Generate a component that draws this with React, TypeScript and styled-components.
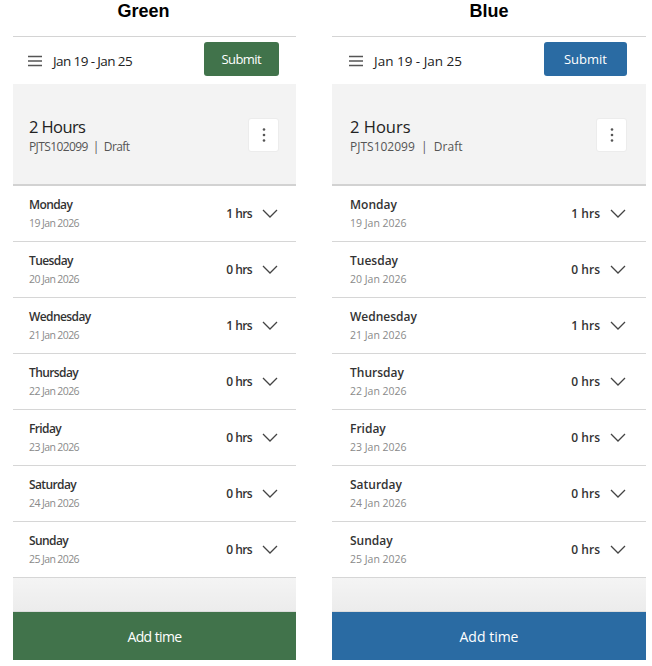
import React from "react";
import styled, { createGlobalStyle } from "styled-components";

interface Day {
    name: string;
    date: string;
    hours: number;
}

const days: Day[] = [
    { name: "Monday", date: "19 Jan 2026", hours: 1 },
    { name: "Tuesday", date: "20 Jan 2026", hours: 0 },
    { name: "Wednesday", date: "21 Jan 2026", hours: 1 },
    { name: "Thursday", date: "22 Jan 2026", hours: 0 },
    { name: "Friday", date: "23 Jan 2026", hours: 0 },
    { name: "Saturday", date: "24 Jan 2026", hours: 0 },
    { name: "Sunday", date: "25 Jan 2026", hours: 0 },
];

interface Variant {
    title: string;
    accent: string;
    width: number;
    pad: number;
    tight: boolean;
    titleShift: number;
}

const variants: Variant[] = [
    { title: "Green", accent: "#41734b", width: 283, pad: 16, tight: true, titleShift: 22 },
    { title: "Blue", accent: "#2a6ba3", width: 314, pad: 18, tight: false, titleShift: 0 },
];

const Hamburger = () => (
    <svg width="14" height="12" viewBox="0 0 14 12">
        <path d="M0 1.5h14M0 6h14M0 10.5h14" stroke="#555" strokeWidth="1.4" />
    </svg>
);

const Chevron = () => (
    <svg width="16" height="9" viewBox="0 0 16 9" fill="none">
        <path d="M1 1l7 7 7-7" stroke="#444" strokeWidth="1.3" />
    </svg>
);

const Kebab = () => (
    <svg width="4" height="16" viewBox="0 0 4 16">
        <circle cx="2" cy="2.5" r="1.3" fill="#555" />
        <circle cx="2" cy="8" r="1.3" fill="#555" />
        <circle cx="2" cy="13.5" r="1.3" fill="#555" />
    </svg>
);

const Phone = ({ v }: { v: Variant }) => (
    <Column $width={v.width}>
        <Title $shift={v.titleShift}>{v.title}</Title>
        <Screen $tight={v.tight}>
            <TopBar $pad={v.pad}>
                <Range>
                    <Hamburger />
                    <span>Jan 19 - Jan 25</span>
                </Range>
                <SubmitButton $accent={v.accent} $tight={v.tight}>Submit</SubmitButton>
            </TopBar>
            <Summary $pad={v.pad}>
                <div>
                    <Total>2 Hours</Total>
                    <Meta>PJTS102099&nbsp; | &nbsp;Draft</Meta>
                </div>
                <MenuButton>
                    <Kebab />
                </MenuButton>
            </Summary>
            <DayList>
                {days.map(d => (
                    <DayRow key={d.name} $pad={v.pad}>
                        <div>
                            <DayName>{d.name}</DayName>
                            <DayDate>{d.date}</DayDate>
                        </div>
                        <HoursBox>
                            <span>{d.hours} hrs</span>
                            <Chevron />
                        </HoursBox>
                    </DayRow>
                ))}
            </DayList>
            <Spacer />
            <AddButton $accent={v.accent}>Add time</AddButton>
        </Screen>
    </Column>
);

const App = () => (
    <>
        <GlobalStyle />
        <Page>
            {variants.map(v => (
                <Phone key={v.title} v={v} />
            ))}
        </Page>
    </>
);

const GlobalStyle = createGlobalStyle`
    body {
        margin: 0;
        background: #ffffff;
        font-family: "Open Sans", "Noto Sans", sans-serif;
        color: #2b2b2b;
    }
`;

const Page = styled.div`
    display: flex;
    gap: 36px;
    padding-left: 13px;
    width: 652px;
    height: 666px;
    box-sizing: border-box;
`;

const Column = styled.div<{ $width: number }>`
    width: ${props => props.$width}px;
    display: flex;
    flex-direction: column;
`;

const Title = styled.div<{ $shift: number }>`
    height: 36px;
    line-height: 22px;
    text-align: center;
    padding-right: ${props => props.$shift}px;
    font-family: "Liberation Sans", Arial, sans-serif;
    font-weight: 700;
    font-size: 18px;
    color: #000;
`;

const Screen = styled.div<{ $tight: boolean }>`
    border-top: 1px solid #d4d4d4;
    display: flex;
    flex-direction: column;
    letter-spacing: ${props => (props.$tight ? "-0.6px" : "0")};
`;

const TopBar = styled.div<{ $pad: number }>`
    height: 47px;
    display: flex;
    align-items: center;
    justify-content: space-between;
    padding: 0 ${props => props.$pad + 1}px 0 ${props => props.$pad - 1}px;
    background: #fff;
`;

const Range = styled.div`
    display: flex;
    align-items: center;
    gap: 11px;
    font-size: 13.5px;
    color: #222;
`;

const SubmitButton = styled.button<{ $accent: string; $tight: boolean }>`
    height: 34px;
    padding: 0 ${props => (props.$tight ? 18 : 20)}px;
    margin-bottom: 3px;
    border: none;
    border-radius: 3px;
    background: ${props => props.$accent};
    color: #fff;
    font-family: inherit;
    font-size: 13px;
    font-weight: 500;
    letter-spacing: inherit;
`;

const Summary = styled.div<{ $pad: number }>`
    height: 102px;
    background: #f3f3f3;
    border-bottom: 2px solid #d2d2d2;
    display: flex;
    justify-content: space-between;
    align-items: flex-start;
    padding: 32px ${props => props.$pad + 1}px 0 ${props => props.$pad}px;
    box-sizing: border-box;
`;

const Total = styled.div`
    font-size: 16.5px;
    line-height: 22px;
    color: #222;
`;

const Meta = styled.div`
    font-size: 12px;
    line-height: 18px;
    color: #555;
`;

const MenuButton = styled.div`
    width: 31px;
    height: 34px;
    margin-top: 2px;
    background: #fff;
    border: 1px solid #ececec;
    border-radius: 3px;
    box-sizing: border-box;
    display: flex;
    align-items: center;
    justify-content: center;
`;

const DayList = styled.div`
    display: flex;
    flex-direction: column;
    background: #fff;
`;

const DayRow = styled.div<{ $pad: number }>`
    height: 56px;
    box-sizing: border-box;
    border-bottom: 1px solid #d6d6d6;
    display: flex;
    align-items: center;
    justify-content: space-between;
    padding: 0 ${props => props.$pad + 2}px 0 ${props => props.$pad}px;
`;

const DayName = styled.div`
    font-size: 12px;
    font-weight: 600;
    line-height: 18px;
    color: #333;
`;

const DayDate = styled.div`
    font-size: 10.5px;
    line-height: 16px;
    margin-top: 1px;
    color: #8a8a8a;
`;

const HoursBox = styled.div`
    display: flex;
    align-items: center;
    gap: 10px;
    font-size: 12px;
    font-weight: 600;
    color: #333;
`;

const Spacer = styled.div`
    height: 33px;
    background: linear-gradient(#f4f4f4, #ececec);
    border-bottom: 1px solid #dcdcdc;
`;

const AddButton = styled.button<{ $accent: string }>`
    height: 48px;
    border: none;
    background: ${props => props.$accent};
    color: #fff;
    font-family: inherit;
    font-size: 14px;
    letter-spacing: inherit;
`;

export default App;
